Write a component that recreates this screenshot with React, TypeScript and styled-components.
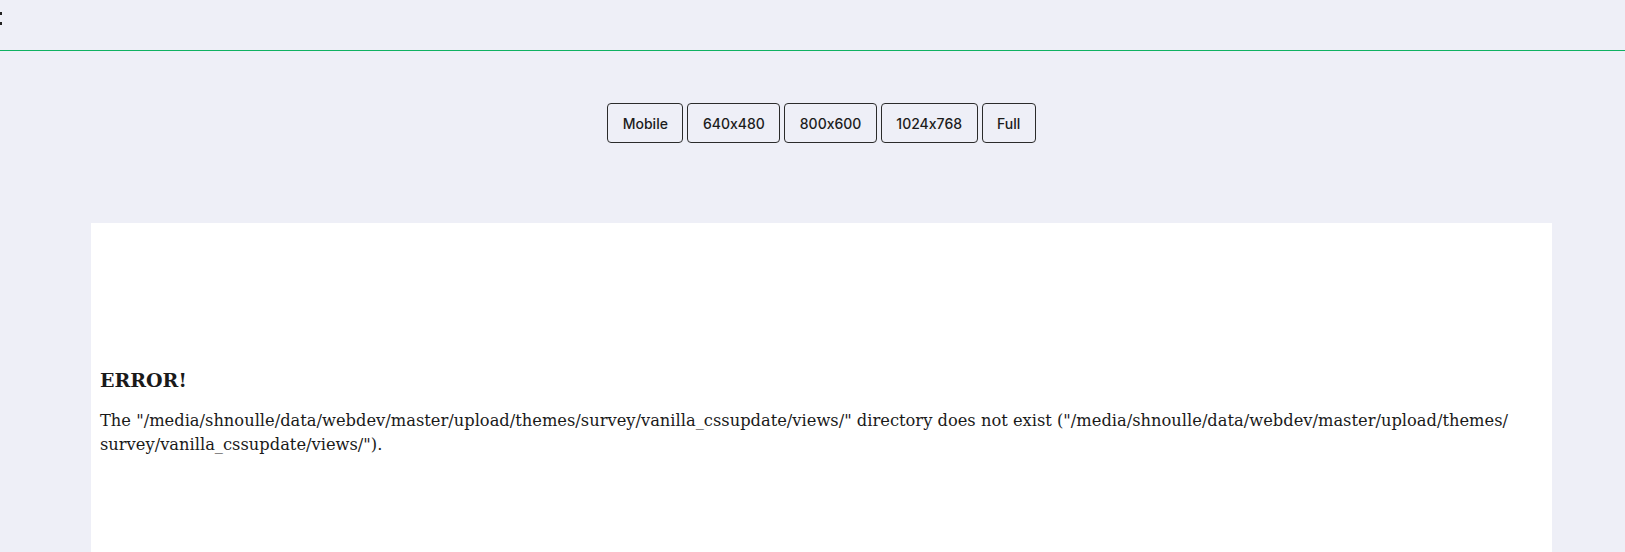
import React from 'react';
import styled, { createGlobalStyle } from 'styled-components';

const GlobalStyle = createGlobalStyle`
  html, body {
    margin: 0;
    padding: 0;
    background: #eeeff7;
    overflow: hidden;
  }
  body {
    font-family: "DejaVu Serif", serif;
    color: #1a1a1a;
  }
`;

const Page = styled.div`
  width: 1625px;
  height: 552px;
  overflow: hidden;
  display: flex;
  flex-direction: column;
`;

const TopBar = styled.div`
  height: 51px;
  flex-shrink: 0;
  border-bottom: 1px solid #0fb162;
  display: flex;
  align-items: flex-start;
  padding-top: 12px;
  box-sizing: border-box;
`;

const Dots = styled.div`
  display: flex;
  flex-direction: column;
  gap: 7px;
  margin-left: -1px;

  span {
    width: 3px;
    height: 3px;
    background: #222;
  }
`;

const SizeBar = styled.div`
  display: flex;
  justify-content: center;
  gap: 4px;
  padding-top: 52px;
  padding-left: 18px;
`;

const SizeButton = styled.button`
  height: 40px;
  padding: 0 14.5px;
  border: 1px solid #2b2b2b;
  border-radius: 4px;
  background: #eeeff7;
  color: #1c1c1c;
  font-family: Inter, "Noto Sans", sans-serif;
  font-feature-settings: "calt" 0;
  font-size: 14px;
  font-weight: 500;
  cursor: pointer;
`;

const Preview = styled.div`
  margin: 80px 73px 0 91px;
  flex: 1;
  background: #fff;
  padding: 145px 9px 0 9px;
`;

const ErrorTitle = styled.h2`
  margin: 0 0 17px 0;
  font-size: 19px;
  font-weight: bold;
  line-height: 24px;
`;

const ErrorText = styled.p`
  margin: 0;
  font-size: 16.3px;
  line-height: 23.5px;
`;

const sizes = ['Mobile', '640x480', '800x600', '1024x768', 'Full'];

export default function App() {
  return (
    <>
      <GlobalStyle />
      <Page>
        <TopBar>
          <Dots>
            <span />
            <span />
          </Dots>
        </TopBar>
        <SizeBar>
          {sizes.map(s => (
            <SizeButton key={s}>{s}</SizeButton>
          ))}
        </SizeBar>
        <Preview>
          <ErrorTitle>ERROR!</ErrorTitle>
          <ErrorText>
            The "/media/shnoulle/data/webdev/master/upload/themes/survey/vanilla_cssupdate/views/" directory does not exist ("/media/shnoulle/data/webdev/master/upload/themes/<wbr />survey/vanilla_cssupdate/views/").
          </ErrorText>
        </Preview>
      </Page>
    </>
  );
}
